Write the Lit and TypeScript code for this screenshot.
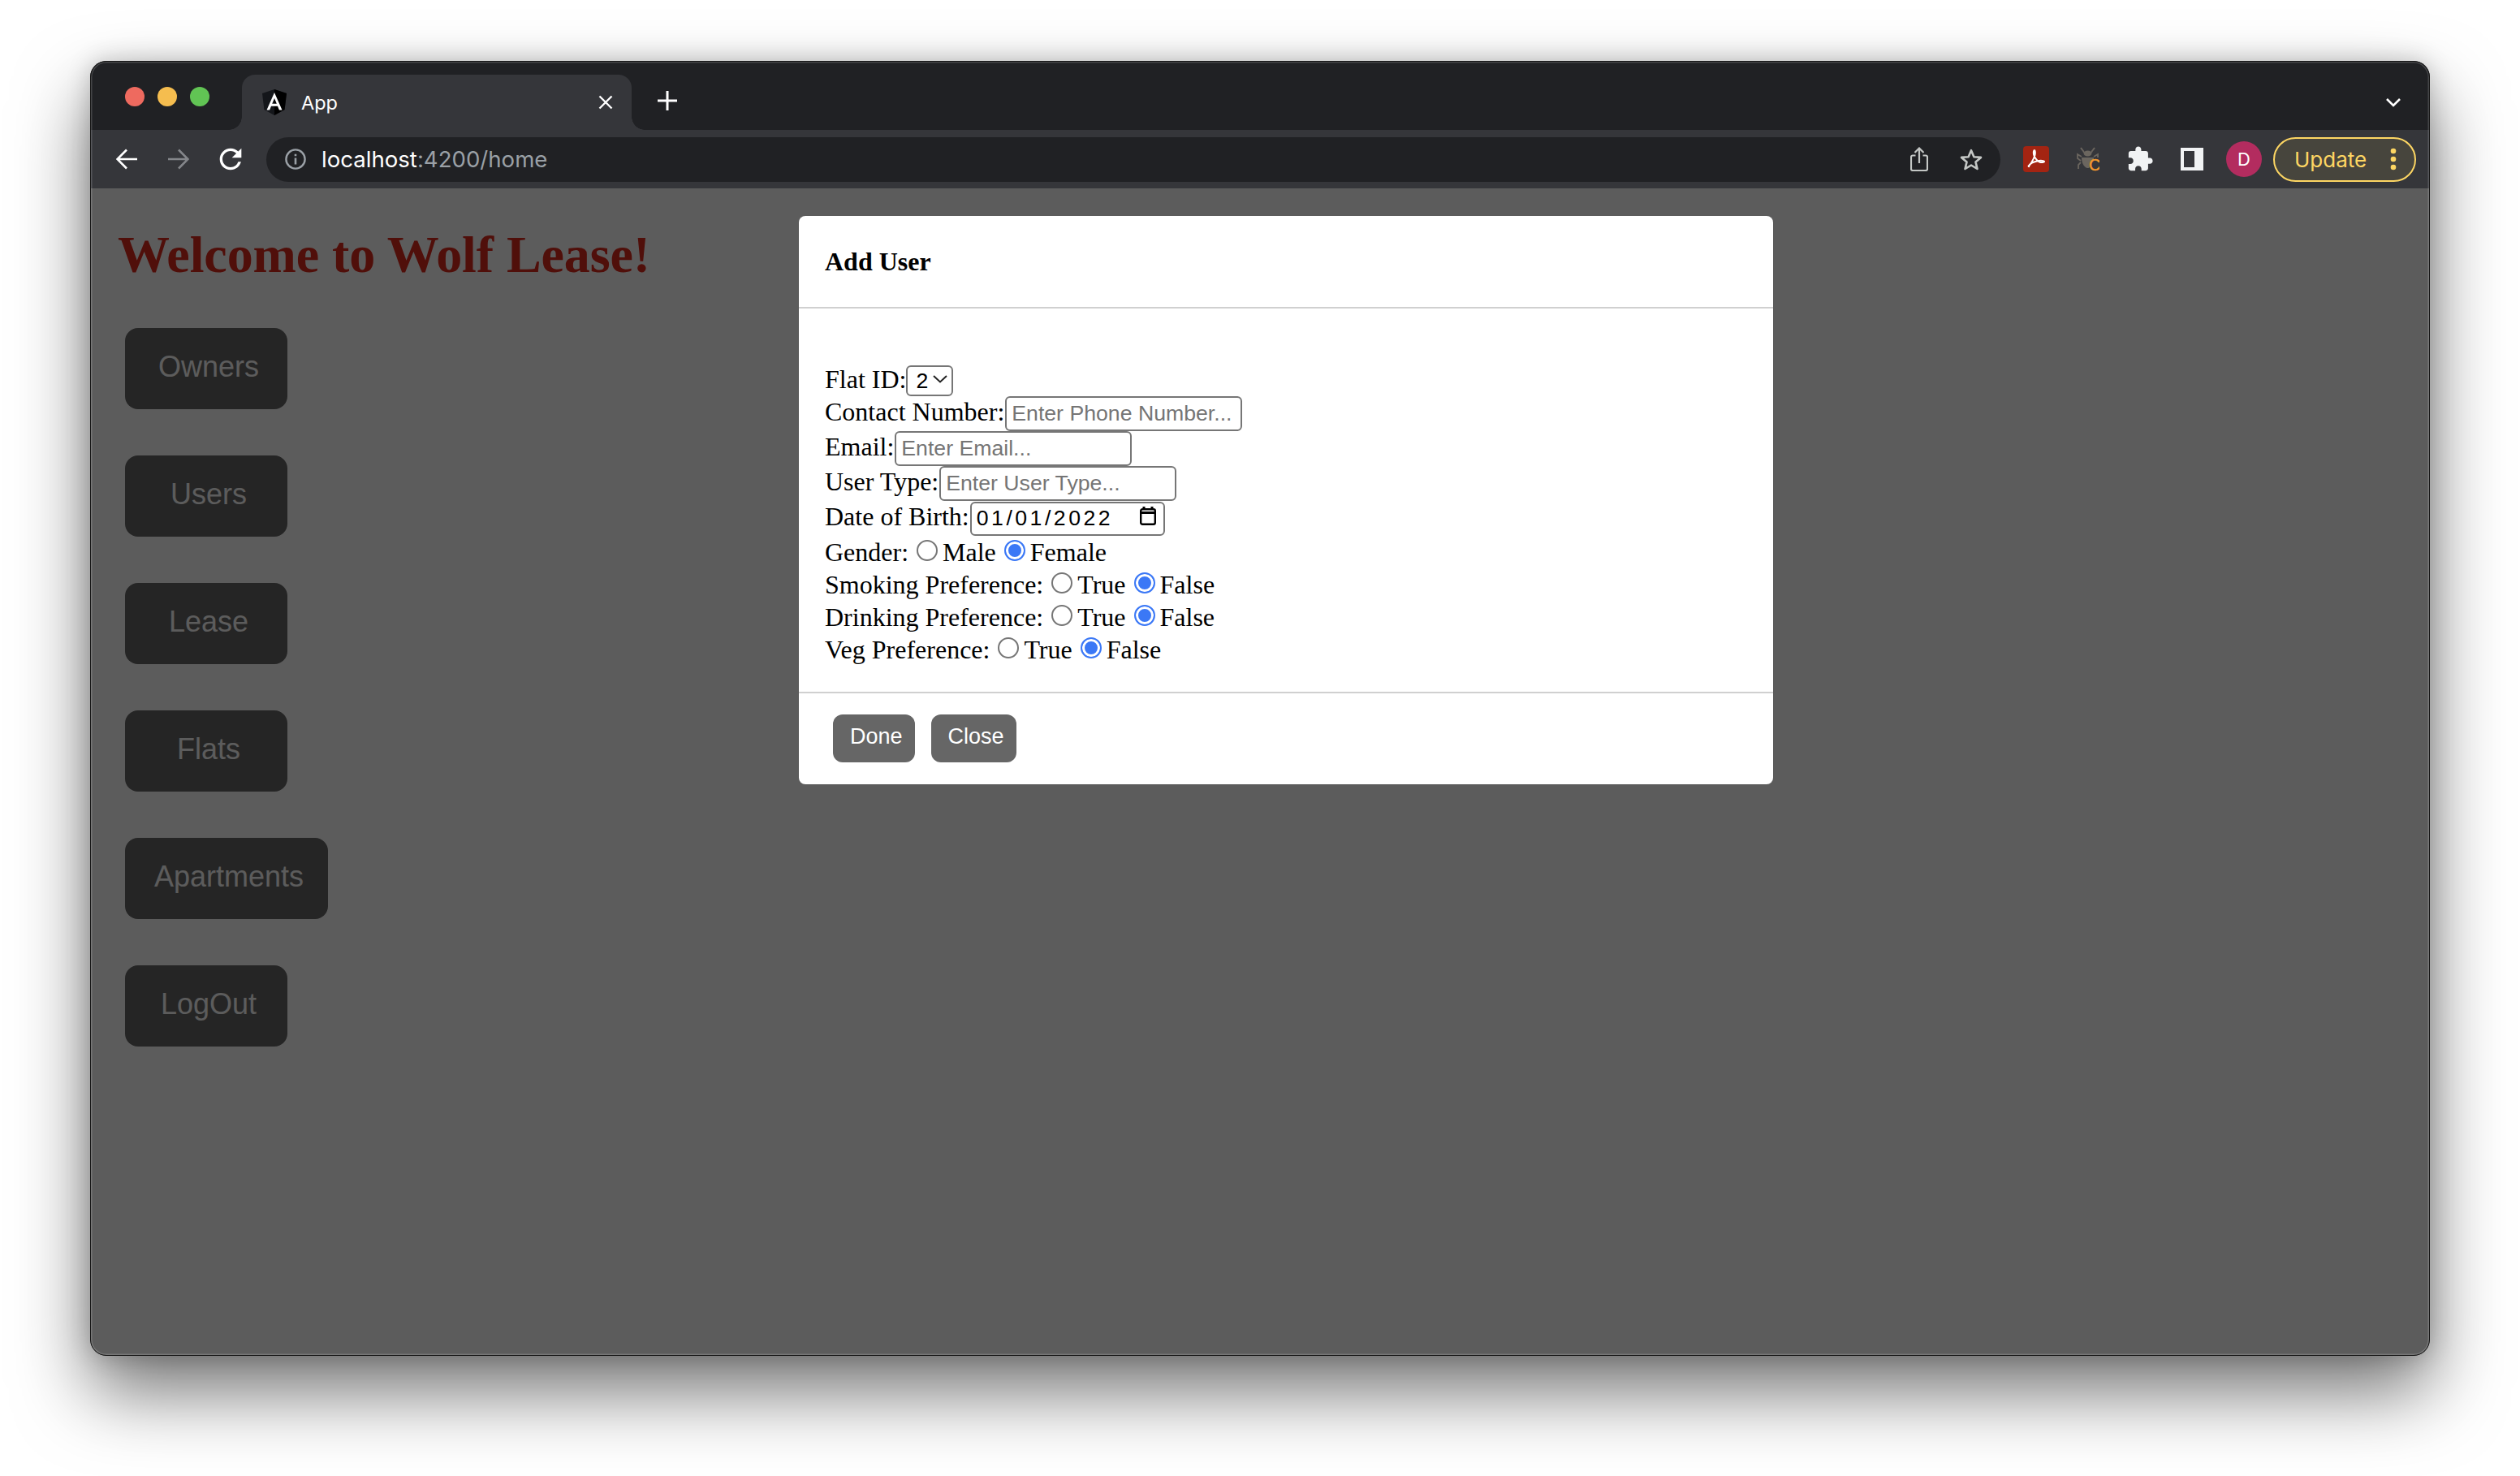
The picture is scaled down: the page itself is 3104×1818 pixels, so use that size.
import { LitElement, html, css } from "lit";
import { customElement } from "lit/decorators.js";

const NAV = ["Owners", "Users", "Lease", "Flats", "Apartments", "LogOut"];
const PREFS = ["Smoking", "Drinking", "Veg"];

@customElement("add-user-modal")
class AddUserModal extends LitElement {
  static styles = css`
    :host {
      display: block;
      width: 1200px;
      background: #fff;
      border-radius: 8px;
      font-family: "Liberation Serif", serif;
      font-size: 32px;
      color: #000;
    }
    .head {
      height: 112px;
      display: flex;
      align-items: center;
      padding-left: 32px;
      font-weight: 700;
      border-bottom: 2px solid #d0d0d0;
    }
    form {
      padding: 67px 32px 32px;
      line-height: 40px;
    }
    .row {
      height: 40px;
      white-space: nowrap;
    }
    .row.h43 {
      height: 43px;
    }
    .row.h44 {
      height: 44px;
    }
    .field {
      box-sizing: border-box;
      width: 292px;
      height: 43px;
      padding: 0 6px;
      margin: 0 0 0 1px;
      border: 2px solid #767676;
      border-radius: 6px;
      background: #fff;
      font: 26.67px "Liberation Sans", Arial, sans-serif;
      color: #000;
      outline: none;
    }
    .field::placeholder {
      color: #757575;
      opacity: 1;
    }
    .wrap {
      position: relative;
      display: inline-block;
    }
    .wrap svg {
      position: absolute;
    }
    select {
      appearance: none;
      box-sizing: border-box;
      width: 58px;
      height: 38px;
      margin: 0;
      padding: 0 0 0 10px;
      border: 2px solid #767676;
      border-radius: 6px;
      background: #fff;
      font: 26.67px "Liberation Sans", Arial, sans-serif;
      color: #000;
    }
    .chev {
      left: 33px;
      top: 15px;
    }
    .date {
      width: 240px;
      height: 42px;
      padding-left: 6px;
      letter-spacing: 3.5px;
    }
    .cal {
      left: 210px;
      top: 8px;
    }
    input[type="radio"] {
      appearance: none;
      box-sizing: border-box;
      width: 26px;
      height: 26px;
      margin: 0 6px 0 2px;
      border: 2px solid #767676;
      border-radius: 50%;
      background: #fff;
    }
    input[type="radio"]:checked {
      border: 2.5px solid #3b78f6;
      background: #3b78f6;
      box-shadow: inset 0 0 0 3px #fff;
    }
    .foot {
      display: flex;
      gap: 20px;
      padding: 26px 0 27px 42px;
      border-top: 2px solid #d0d0d0;
    }
    button {
      height: 59px;
      padding: 0 15px 4px 21px;
      border: 0;
      border-radius: 12px;
      background: #666;
      color: #fff;
      font: 27px "Liberation Sans", Arial, sans-serif;
    }
  `;

  render() {
    return html`
      <div class="head">Add User</div>
      <form>
        <div class="row">Flat ID:<span class="wrap"><select><option>2</option></select><svg class="chev" width="18" height="10" viewBox="0 0 18 10"><path d="M1 1l8 7.500L17 1" fill="none" stroke="#222" stroke-width="2"/></svg></span></div>
        <div class="row h43">Contact Number:<input class="field" placeholder="Enter Phone Number..." /></div>
        <div class="row h43">Email:<input class="field" placeholder="Enter Email..." /></div>
        <div class="row h43">User Type:<input class="field" placeholder="Enter User Type..." /></div>
        <div class="row h44">Date of Birth:<span class="wrap"><input class="field date" value="01/01/2022" /><svg class="cal" width="20" height="23" viewBox="0 0 20 23"><path d="M5 0v4M15 0v4" stroke="#000" stroke-width="3"/><rect x="1.200" y="3.200" width="17.600" height="18.600" rx="2" fill="none" stroke="#000" stroke-width="2.400"/><path d="M1 6h18v3H1z"/></svg></span></div>
        <div class="row">Gender: <input type="radio" name="gender" />Male <input type="radio" name="gender" checked />Female</div>
        ${PREFS.map(
          (p) => html`<div class="row">${p} Preference: <input type="radio" name=${p} />True <input type="radio" name=${p} checked />False</div>`
        )}
      </form>
      <div class="foot"><button>Done</button><button>Close</button></div>
    `;
  }
}

@customElement("app-root")
class AppRoot extends LitElement {
  static styles = css`
    :host {
      display: block;
      box-sizing: border-box;
      width: 3104px;
      height: 1818px;
      padding: 75px 111px 0;
      background: #fff;
      font-family: Inter, "Liberation Sans", sans-serif;
    }
    .window {
      position: relative;
      display: flex;
      flex-direction: column;
      width: 2882px;
      height: 1595px;
      border-radius: 20px;
      background: #fff;
      box-shadow: 0 44px 90px rgba(0, 0, 0, 0.55), 0 0 30px rgba(0, 0, 0, 0.2);
    }
    .window::after {
      content: "";
      position: absolute;
      inset: 0;
      border: 1px solid #151515;
      border-radius: 20px;
      box-shadow: inset 0 0 0 1.5px rgba(255, 255, 255, 0.17);
      pointer-events: none;
    }
    .tabs {
      display: flex;
      height: 85px;
      flex: none;
      padding-top: 17px;
      box-sizing: border-box;
      background: #202124;
      border-radius: 20px 20px 0 0;
      color: #fff;
    }
    .lights {
      display: flex;
      gap: 16px;
      width: 187px;
      padding: 15px 0 0 43px;
      box-sizing: border-box;
    }
    .lights i {
      width: 24px;
      height: 24px;
      border-radius: 50%;
    }
    .tab {
      position: relative;
      display: flex;
      align-items: center;
      width: 480px;
      height: 68px;
      padding: 0 23px 0 24px;
      box-sizing: border-box;
      background: #35363a;
      border-radius: 16px 16px 0 0;
      font-size: 23.5px;
    }
    .tab::before,
    .tab::after {
      content: "";
      position: absolute;
      bottom: 0;
      width: 16px;
      height: 16px;
      background: radial-gradient(circle at var(--cx) 0, #202124 15.5px, #35363a 16px);
    }
    .tab::before {
      --cx: 0;
      left: -16px;
    }
    .tab::after {
      --cx: 100%;
      right: -16px;
    }
    .tab span {
      margin-left: 17px;
      flex: 1;
    }
    .newtab {
      margin: 20px 0 0 32px;
    }
    .chevron {
      margin: 27px 35px 0 auto;
    }
    .toolbar {
      display: flex;
      align-items: center;
      flex: none;
      height: 72px;
      padding: 0 17px 0 13px;
      box-sizing: border-box;
      background: #35363a;
    }
    .slot {
      display: flex;
      align-items: center;
      justify-content: center;
      flex: none;
      width: 64px;
      height: 55px;
    }
    .omni {
      display: flex;
      align-items: center;
      flex: 1;
      height: 55px;
      margin: 0 12px;
      padding: 0 4px 0 23px;
      background: #202124;
      border-radius: 28px;
      color: #9aa0a6;
      font-size: 27.6px;
    }
    .url {
      flex: 1;
      margin-left: 19px;
    }
    .url b {
      color: #fff;
      font-weight: 400;
    }
    .avatar {
      display: flex;
      align-items: center;
      justify-content: center;
      width: 44px;
      height: 44px;
      border-radius: 50%;
      background: #b32c5f;
      color: #fff;
      font-size: 22px;
    }
    .update {
      display: flex;
      align-items: center;
      box-sizing: border-box;
      width: 176px;
      height: 55px;
      margin-left: 4px;
      padding-left: 24px;
      border: 2px solid #fdd663;
      border-radius: 28px;
      background: #47453d;
      color: #fdd663;
      font-size: 26px;
    }
    .update svg {
      margin-left: auto;
      margin-right: 22px;
    }
    .page {
      position: relative;
      flex: 1;
      display: flex;
      flex-direction: column;
      align-items: flex-start;
      padding: 45px 0 0 34px;
      border-radius: 0 0 20px 20px;
      overflow: hidden;
      background: #fff;
    }
    h1 {
      margin: 0 0 53px;
      font: 700 64px/74px "Liberation Serif", serif;
      letter-spacing: -0.1px;
      color: #de2a1e;
    }
    nav {
      display: flex;
      flex-direction: column;
      align-items: flex-start;
      gap: 57px;
      margin-left: 9px;
    }
    nav button {
      display: flex;
      align-items: center;
      justify-content: center;
      box-sizing: border-box;
      min-width: 200px;
      height: 100px;
      padding: 0 30px 4px 36px;
      border: 0;
      border-radius: 16px;
      background: #666;
      color: #fff;
      font: 36px "Liberation Sans", Arial, sans-serif;
    }
    .overlay {
      position: absolute;
      inset: 0;
      padding: 34px 0 0 873px;
      background: rgba(0, 0, 0, 0.64);
    }
  `;

  render() {
    return html`
      <div class="window">
        <div class="tabs">
          <div class="lights">
            <i style="background:#ee6a5f"></i><i style="background:#f5bd4f"></i><i style="background:#61c454"></i>
          </div>
          <div class="tab">
            <svg width="32" height="32" viewBox="0 0 32 32">
              <path d="M16 0L1 5l2.400 20L16 32l12.600-7L31 5z" fill="#14161a" />
              <path d="M16 0v32l12.600-7L31 5z" fill="#000" />
              <path d="M16 4L6.500 25.500h3.600l1.900-4.800h8l1.900 4.800h3.600zm-2.800 13.800L16 11l2.800 6.800z" fill="#fff" />
            </svg>
            <span>App</span>
            <svg width="18" height="18" viewBox="0 0 18 18"><path d="M1.500 1.500l15 15M16.500 1.500l-15 15" stroke="#fff" stroke-width="2.400" /></svg>
          </div>
          <svg class="newtab" width="24" height="24" viewBox="0 0 24 24"><path d="M12 0v24M0 12h24" stroke="#fff" stroke-width="3" /></svg>
          <svg class="chevron" width="20" height="14" viewBox="0 0 20 14"><path d="M2 3l8 8 8-8" fill="none" stroke="#fff" stroke-width="2.600" /></svg>
        </div>
        <div class="toolbar">
          <div class="slot"><svg width="26" height="26" viewBox="0 0 26 26"><path d="M26 13H2M13 1.500L1.500 13 13 24.500" fill="none" stroke="#fff" stroke-width="2.600" /></svg></div>
          <div class="slot"><svg width="26" height="26" viewBox="0 0 26 26"><path d="M0 13h24M13 1.500L24.500 13 13 24.500" fill="none" stroke="#84868a" stroke-width="2.600" /></svg></div>
          <div class="slot"><svg width="40" height="40" viewBox="0 0 24 24"><path fill="#fff" d="M17.650 6.350A7.958 7.958 0 0 0 12 4c-4.420 0-7.990 3.580-7.990 8s3.570 8 7.990 8c3.730 0 6.840-2.550 7.730-6h-2.080A5.990 5.990 0 0 1 12 18c-3.310 0-6-2.690-6-6s2.690-6 6-6c1.660 0 3.140.69 4.220 1.780L13 11h7V4l-2.350 2.350z" /></svg></div>
          <div class="omni">
            <svg width="26" height="26" viewBox="0 0 26 26"><circle cx="13" cy="13" r="11.600" fill="none" stroke="#9aa0a6" stroke-width="2.400" /><path d="M11.700 11.500h2.600V19.500h-2.600zM11.700 6.700h2.600v2.600h-2.600z" fill="#9aa0a6" /></svg>
            <div class="url"><b>localhost</b>:4200/home</div>
            <div class="slot"><svg width="22" height="30" viewBox="0 0 22 30"><path d="M6.500 10.500H3a2 2 0 0 0-2 2V27a2 2 0 0 0 2 2h16a2 2 0 0 0 2-2V12.500a2 2 0 0 0-2-2h-3.500M11 20V2M5.500 7L11 1.500 16.500 7" fill="none" stroke="#c4c7c5" stroke-width="2.200" /></svg></div>
            <div class="slot"><svg width="30" height="28" viewBox="0 0 30 28"><path d="M15 3.200l3.400 8 8.600.7-6.500 5.700 2 8.400-7.500-4.500-7.500 4.500 2-8.400L3 11.900l8.600-.7z" fill="none" stroke="#c4c7c5" stroke-width="2.600" stroke-linejoin="round" /></svg></div>
          </div>
          <div class="slot"><svg width="32" height="32" viewBox="0 0 32 32"><rect width="32" height="32" rx="4" fill="#a32412" /><path d="M6 25c3-1.500 7-9 8.500-14 .6-2.500.4-6-.6-6s-1.400 2.600-.8 5.500c1 4 4.500 8 7 9 2.500.9 6 .6 6-.5 0-1.300-5-1.500-9-.6-4 .9-8.500 3-10 5.500-.8 1 .5 1.500-.1 1.100z" fill="none" stroke="#fff" stroke-width="2" /></svg></div>
          <div class="slot"><svg width="28" height="30" viewBox="0 0 28 30"><g fill="none" stroke="#6b665f" stroke-width="1.800"><path d="M9 7C8 4 6 3 5 1M18 7c1-3 3-4 4-6M6 12L1 9v5l4 3M21 12l5-3v4M5 19l-3 3v5" /></g><ellipse cx="13.500" cy="8" rx="5" ry="3.500" fill="#6b665f" /><path d="M6 13h15v3c-3 1-5 4-5 9-1 1-2 1-3 1-4-1-7-6-7-13z" fill="#6b665f" /><text x="15" y="29" font-family="Liberation Sans" font-size="20" fill="#f29a2e" stroke="#f29a2e" stroke-width="0.500">C</text></svg></div>
          <div class="slot"><svg width="34" height="34" viewBox="0 0 24 24"><path fill="#f1f3f4" d="M20.500 11H19V7c0-1.100-.9-2-2-2h-4V3.500C13 2.120 11.880 1 10.500 1S8 2.120 8 3.500V5H4c-1.100 0-1.990.9-1.990 2v3.800H3.500c1.490 0 2.700 1.210 2.700 2.700s-1.210 2.700-2.700 2.700H2V20c0 1.100.9 2 2 2h3.800v-1.500c0-1.490 1.210-2.700 2.700-2.700 1.490 0 2.700 1.210 2.700 2.700V22H17c1.100 0 2-.9 2-2v-4h1.500c1.380 0 2.500-1.120 2.500-2.500S21.880 11 20.500 11z" /></svg></div>
          <div class="slot"><svg width="28" height="28" viewBox="0 0 28 28"><path d="M0 0h28v28H0z" fill="#f1f3f4" /><path d="M4 4h13v20H4z" fill="#35363a" /></svg></div>
          <div class="slot"><div class="avatar">D</div></div>
          <div class="update">
            Update
            <svg width="8" height="28" viewBox="0 0 8 28"><circle cx="4" cy="4" r="3.300" fill="#fdd663" /><circle cx="4" cy="14" r="3.300" fill="#fdd663" /><circle cx="4" cy="24" r="3.300" fill="#fdd663" /></svg>
          </div>
        </div>
        <div class="page">
          <h1>Welcome to Wolf Lease!</h1>
          <nav>${NAV.map((n) => html`<button>${n}</button>`)}</nav>
          <div class="overlay"><add-user-modal></add-user-modal></div>
        </div>
      </div>
    `;
  }
}
